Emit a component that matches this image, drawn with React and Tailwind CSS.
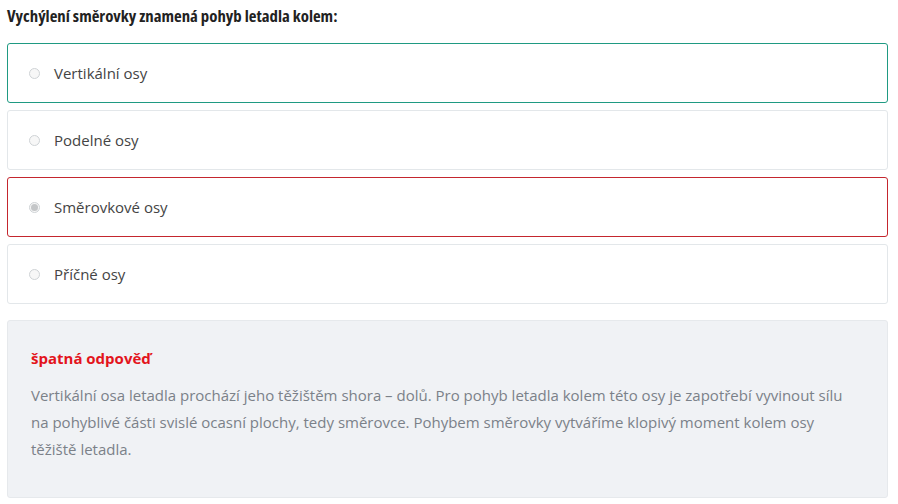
const options = [
  { label: "Vertikální osy", state: "correct" },
  { label: "Podelné osy", state: "none" },
  { label: "Směrovkové osy", state: "wrong" },
  { label: "Příčné osy", state: "none" },
];

const borderFor = {
  correct: "border-[#1f9a82]",
  wrong: "border-[#c4262e]",
  none: "border-[#e3e7ea]",
};

const Radio = ({ checked }) => (
  <span className="w-[11px] h-[11px] rounded-full border border-[#cfd3d6] bg-[#f7f7f7] flex items-center justify-center shrink-0">
    {checked && <span className="w-[7px] h-[7px] rounded-full bg-[#c4c6c8]" />}
  </span>
);

const App = () => {
  return (
    <div className="w-full bg-white pl-[7px] pr-[10px] pt-[5px] font-['Open_Sans',sans-serif]">
      <h3 className="text-[16.8px] leading-[22px] font-bold text-[#222] font-['Open_Sans',sans-serif] [font-stretch:75%]">
        Vychýlení směrovky znamená pohyb letadla kolem:
      </h3>
      <div className="mt-[16px] flex flex-col gap-[7px]">
        {options.map((o) => (
          <div
            key={o.label}
            className={`h-[60px] bg-white border rounded-[3px] flex flex-row items-center gap-[14px] pl-[21px] ${borderFor[o.state]}`}
          >
            <Radio checked={o.state === "wrong"} />
            <span className="text-[15px] text-[#444] leading-none">{o.label}</span>
          </div>
        ))}
      </div>
      <div className="mt-[16px] bg-[#f0f2f5] border border-[#e6e9ec] rounded-[3px] px-[23px] pt-[26px] pb-[34px]">
        <p className="text-[15px] font-bold text-[#e3141c] leading-[22px]">špatná odpověď</p>
        <p className="mt-[13px] text-[15px] leading-[27px] text-[#7b8189] pr-[4px]">
          Vertikální osa letadla prochází jeho těžištěm shora – dolů. Pro pohyb letadla kolem této osy je zapotřebí vyvinout sílu na pohyblivé části svislé ocasní plochy, tedy směrovce. Pohybem směrovky vytváříme klopivý moment kolem osy těžiště letadla.
        </p>
      </div>
    </div>
  );
};

export default App;
